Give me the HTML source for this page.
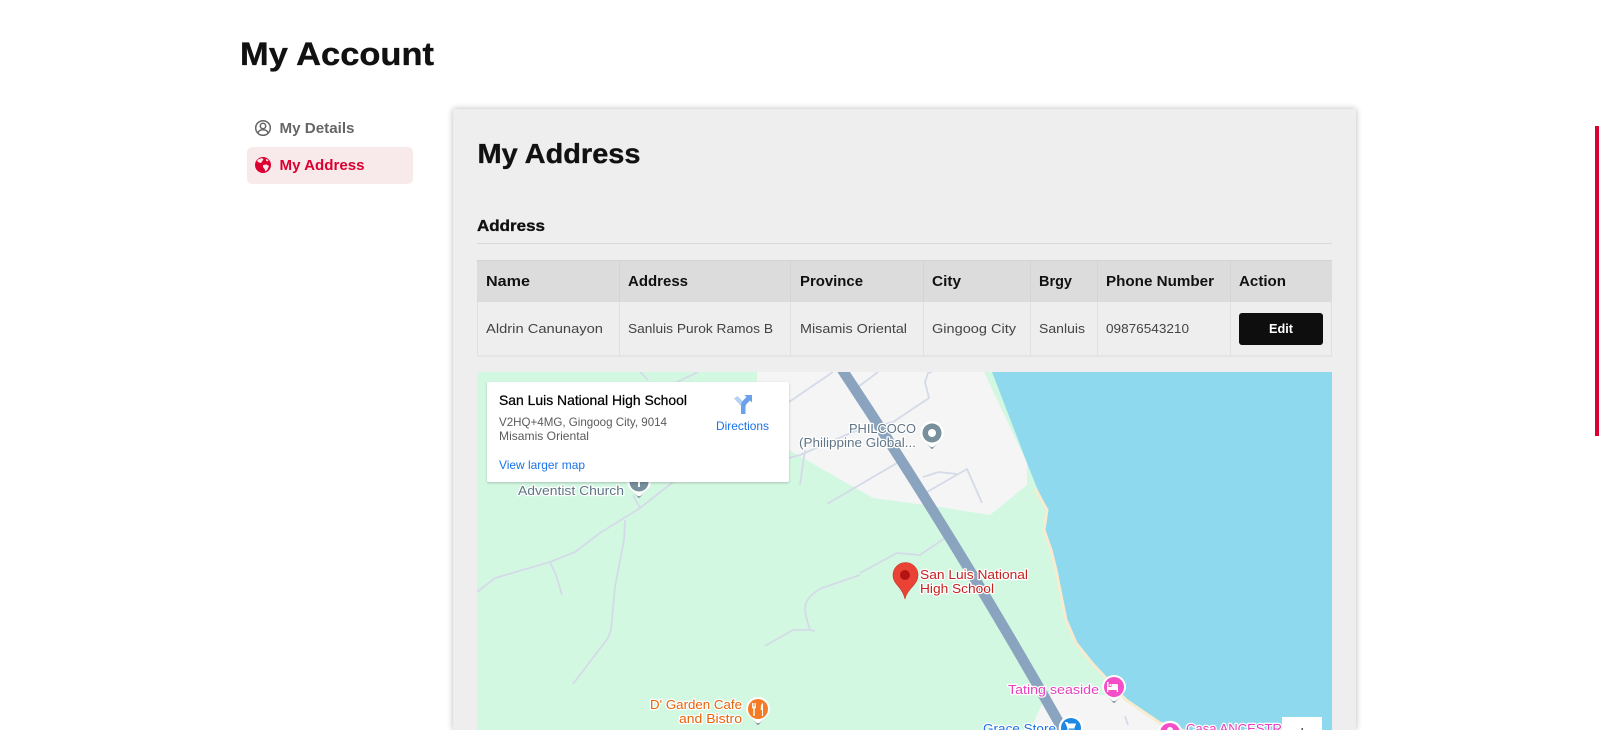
<!DOCTYPE html>
<html lang="en">
<head>
<meta charset="utf-8">
<title>My Account</title>
<style>
html,body{margin:0;padding:0;width:1599px;height:730px;overflow:hidden;background:#fff;font-family:"Liberation Sans",sans-serif}
#root{position:relative;width:1599px;height:730px;overflow:hidden;background:#fff}
.pill{position:absolute;left:247px;top:147px;width:166px;height:37px;background:#f8e9ea;border-radius:5px}
.panel{position:absolute;left:453px;top:109px;width:903px;height:621px;background:#eee;box-shadow:0 0 6px rgba(0,0,0,.28)}
.bar{position:absolute;left:1595px;top:126px;width:4px;height:310px;background:#dc0032}
svg.page{position:absolute;left:0;top:0;display:block}
text{font-family:"Liberation Sans",sans-serif}
.b{font-weight:700;fill:#111;stroke:#111;stroke-width:.35px}
.td{font-size:13px;fill:#444}
.th{font-size:14.5px;font-weight:700;fill:#111}
.m{font-size:13px;paint-order:stroke;stroke:#fff;stroke-width:2.5px;stroke-linejoin:round}
.r{fill:none;stroke:#d4dae8;stroke-width:1.8;stroke-linejoin:round;stroke-linecap:butt}
.card{font-size:12px}
</style>
</head>
<body>
<div id="root">
<div class="pill"></div>
<div class="panel"></div>
<div class="bar"></div>
<svg class="page" width="1599" height="730" viewBox="0 0 1599 730" xmlns="http://www.w3.org/2000/svg">
<defs>
<clipPath id="mapclip"><rect x="477" y="372" width="855" height="358"/></clipPath>
<filter id="cs" x="-5%" y="-5%" width="110%" height="115%"><feDropShadow dx="0" dy="1" stdDeviation="1.2" flood-color="#000" flood-opacity=".22"/></filter>
<g id="pin">
<path d="M-7 8l6 7.500q1 1 2 0l6-7.500z" fill="#8a9aa5"/>
<path d="M-12 0a12 12 0 1 1 24 0c0 4.500-3 7-5.500 9l-4.500 4.500q-2 1.300-4 0l-4.500-4.500c-2.500-2-5.500-4.500-5.500-9z" fill="#fff"/>
</g>
</defs>

<text x="240" y="65" class="b" font-size="32" textLength="194" lengthAdjust="spacingAndGlyphs">My Account</text>

<!-- sidebar -->
<g fill="none" stroke="#666" stroke-width="1.500">
<circle cx="263" cy="128" r="7.300"/>
<circle cx="263" cy="126" r="2.700"/>
<path d="M257.800 133c1-2.400 3-3.200 5.200-3.200s4.200.8 5.200 3.200"/>
</g>
<text x="279.500" y="133" font-size="14.500" font-weight="700" fill="#666" textLength="75" lengthAdjust="spacingAndGlyphs">My Details</text>
<circle cx="263" cy="165" r="8" fill="#dc0032"/>
<path d="M258 159.500l4-1.500 1.500 1.500-1.500 2-1 1.500-2-.5-2-1.500zM263 165l3.500-.5 2.500 1.500-1.500 3.500-2 2-1-2.500-1.500-2zM266 159l2.500 1-1 1.500-1.500-1z" fill="#f8e9ea"/>
<text x="279.500" y="170" font-size="14.500" font-weight="700" fill="#dc0032" textLength="85" lengthAdjust="spacingAndGlyphs">My Address</text>

<!-- panel heads -->
<text x="477.500" y="163" class="b" font-size="28" textLength="163" lengthAdjust="spacingAndGlyphs">My Address</text>
<text x="477" y="231" class="b" font-size="16" textLength="68" lengthAdjust="spacingAndGlyphs">Address</text>
<rect x="477" y="243" width="855" height="1" fill="#d8d8d8"/>

<!-- table -->
<rect x="477" y="260" width="855" height="42" fill="#dcdcdc"/>
<rect x="477" y="260" width="855" height="1" fill="#d3d3d3"/>
<rect x="477" y="355.500" width="855" height="1" fill="#dcdcdc"/>
<g fill="#d4d4d4">
<rect x="619" y="260" width="1" height="42"/><rect x="790" y="260" width="1" height="42"/><rect x="923" y="260" width="1" height="42"/><rect x="1030" y="260" width="1" height="42"/><rect x="1097" y="260" width="1" height="42"/><rect x="1230" y="260" width="1" height="42"/>
</g>
<g fill="#e0e0e0">
<rect x="619" y="302" width="1" height="54"/><rect x="790" y="302" width="1" height="54"/><rect x="923" y="302" width="1" height="54"/><rect x="1030" y="302" width="1" height="54"/><rect x="1097" y="302" width="1" height="54"/><rect x="1230" y="302" width="1" height="54"/><rect x="1331" y="302" width="1" height="54"/><rect x="477" y="302" width="1" height="54"/>
</g>
<text x="486" y="286" class="th" textLength="44" lengthAdjust="spacingAndGlyphs">Name</text>
<text x="628" y="286" class="th" textLength="60" lengthAdjust="spacingAndGlyphs">Address</text>
<text x="800" y="286" class="th" textLength="63" lengthAdjust="spacingAndGlyphs">Province</text>
<text x="932" y="286" class="th" textLength="29" lengthAdjust="spacingAndGlyphs">City</text>
<text x="1039" y="286" class="th" textLength="33" lengthAdjust="spacingAndGlyphs">Brgy</text>
<text x="1106" y="286" class="th" textLength="108" lengthAdjust="spacingAndGlyphs">Phone Number</text>
<text x="1239" y="286" class="th" textLength="47" lengthAdjust="spacingAndGlyphs">Action</text>

<text x="486" y="333" class="td" textLength="117" lengthAdjust="spacingAndGlyphs">Aldrin Canunayon</text>
<text x="628" y="333" class="td" textLength="145" lengthAdjust="spacingAndGlyphs">Sanluis Purok Ramos B</text>
<text x="800" y="333" class="td" textLength="107" lengthAdjust="spacingAndGlyphs">Misamis Oriental</text>
<text x="932" y="333" class="td" textLength="84" lengthAdjust="spacingAndGlyphs">Gingoog City</text>
<text x="1039" y="333" class="td" textLength="46" lengthAdjust="spacingAndGlyphs">Sanluis</text>
<text x="1106" y="333" class="td" textLength="83" lengthAdjust="spacingAndGlyphs">09876543210</text>
<rect x="1239" y="313" width="84" height="32" rx="3" fill="#0e0e0e"/>
<text x="1269" y="333" font-size="12.500" font-weight="700" fill="#fff" textLength="24" lengthAdjust="spacingAndGlyphs">Edit</text>

<!-- map -->
<g clip-path="url(#mapclip)">
<rect x="477" y="372" width="855" height="358" fill="#d3f8e2"/>
<path d="M757 372L757 440L789 450L873 498L940 507L990 515L1027 485L1027 463L984 372Z" fill="#f5f5f5"/>
<path d="M1030 730L1043 702L1047 695L1120 695L1127 700L1160 723L1190 730Z" fill="#f5f5f5"/>
<path d="M992 372L1027 463L1037 488L1048 510L1045 530L1052 550L1057 570L1063 600L1067 620L1077 643L1093 663L1127 700L1160 723L1190 731L1332 731L1332 372Z" fill="#8fd9ef"/>
<path d="M1035 489L1047 510L1044 530L1051 550L1056 570L1062 600L1066 620L1076 643L1092 663L1126 700L1160 723L1185 731" fill="none" stroke="#f7eccf" stroke-width="3" stroke-linejoin="round"/>

<g class="r">
<path d="M477 592L495 578L550 562L575 552L600 533L640 508L673 482"/>
<path d="M550 562L556 575L562 595"/>
<path d="M625 520L624 540L615 587L611 630L608 638L573 684"/>
<path d="M640 508L633 495"/>
<path d="M640 372L648 380M698 372L673 384"/>
<path d="M860 575L822 588Q810 594 806 603Q804 610 807 620L810 630L793 630L765 646M810 630L815 631"/>
<path d="M860 573L897 553L920 555L945 538"/>
<path d="M789 402L833 372M858 387L878 372"/>
<path d="M789 458L800 455L853 432L893 422L929 398L925 382L928 373L932 372"/>
<path d="M805 450L800 485"/>
<path d="M827 504L897 463"/>
<path d="M923 477L939 472L957 474"/>
<path d="M927 492L967 469L982 503"/>
<path d="M1125 716L1128 725"/>
</g>
<path d="M841 368Q963 551.500 1066 735" fill="none" stroke="#8aa3bf" stroke-width="10.500"/>

<!-- PHILCOCO -->
<text x="849" y="433" class="m" fill="#5f7485" textLength="67" lengthAdjust="spacingAndGlyphs">PHILCOCO</text>
<text x="799" y="447" class="m" fill="#5f7485" textLength="117" lengthAdjust="spacingAndGlyphs">(Philippine Global...</text>
<use href="#pin" x="932" y="433"/>
<circle cx="932" cy="433" r="9.500" fill="#78909c"/>
<circle cx="932" cy="433" r="4" fill="#fff"/>

<!-- Church -->
<text x="518" y="495" class="m" fill="#5f7485" textLength="106" lengthAdjust="spacingAndGlyphs">Adventist Church</text>
<use href="#pin" x="639" y="482"/>
<circle cx="639" cy="482" r="9.500" fill="#78909c"/>
<rect x="638" y="476" width="2" height="11" fill="#fff"/>

<!-- San Luis pin -->
<text x="920" y="579" class="m" fill="#c5221f" textLength="108" lengthAdjust="spacingAndGlyphs">San Luis National</text>
<text x="920" y="593" class="m" fill="#c5221f" textLength="74" lengthAdjust="spacingAndGlyphs">High School</text>
<path d="M905 599c-1.200-5.500-3.500-9-6.500-12.500c-3-3.500-5.500-6.500-5.500-11.500a12.500 12.500 0 1 1 25 0c0 5-2.500 8-5.500 11.500c-3 3.500-6.300 7-7.500 12.500z" fill="#ea4335" stroke="#c5352a" stroke-width=".6"/>
<circle cx="905" cy="575" r="5" fill="#b31412"/>

<!-- D Garden -->
<text x="650" y="709" class="m" fill="#e8630a" textLength="92" lengthAdjust="spacingAndGlyphs">D' Garden Cafe</text>
<text x="679" y="723" class="m" fill="#e8630a" textLength="63" lengthAdjust="spacingAndGlyphs">and Bistro</text>
<use href="#pin" x="758" y="709"/>
<circle cx="758" cy="709" r="10" fill="#f57c24"/>
<path d="M752 703v4c0 1 .7 1.500 1.300 1.700V716h1.400v-7.300c.6-.2 1.300-.7 1.300-1.700v-4h-.8v3.500h-.7V703h-.9v3.500h-.7V703zM763 703c-1.500.8-2.200 2.500-2.200 4.500v2.500h1.200v6h1z" fill="#fff"/>

<!-- Tating -->
<text x="1008" y="694" class="m" fill="#e83fbf" textLength="91" lengthAdjust="spacingAndGlyphs">Tating seaside</text>
<use href="#pin" x="1114" y="687"/>
<circle cx="1114" cy="687" r="10" fill="#f44fc8"/>
<path d="M1107 682h1.500v5h3v-3h5c1 0 1.500.8 1.500 1.500V692h-1.300v-2h-8.400v2H1107zM1109.500 684.300h1.500v1.700h-1.500z" fill="#fff"/>

<!-- Grace -->
<text x="983" y="733" class="m" fill="#1a73e8" textLength="73" lengthAdjust="spacingAndGlyphs">Grace Store</text>
<circle cx="1071" cy="728" r="12.300" fill="#fff"/>
<circle cx="1071" cy="728" r="10" fill="#1e88e5"/>
<path d="M1065 722h2.500l.6 1.500h8l-1.800 5h-5.500l-.5 1.200h6.500V731h-8.300l1-2.500-2-5.200H1065z" fill="#fff"/>

<!-- Casa -->
<text x="1186" y="733" class="m" fill="#e83fbf" textLength="96" lengthAdjust="spacingAndGlyphs">Casa ANCESTR</text>
<circle cx="1170" cy="733" r="12.300" fill="#fff"/>
<circle cx="1170" cy="733" r="10" fill="#f44fc8"/>
<circle cx="1170" cy="730" r="3" fill="#fff"/>

<!-- zoom control -->
<rect x="1282" y="717" width="40" height="14" fill="#fff"/>
<rect x="1301.500" y="728" width="1.500" height="3" fill="#555"/>

<!-- info card -->
<rect x="487" y="382" width="302" height="100" rx="2" fill="#fff" filter="url(#cs)"/>
<text x="499" y="405" font-size="14" fill="#000" stroke="#000" stroke-width=".25" textLength="188" lengthAdjust="spacingAndGlyphs">San Luis National High School</text>
<text x="499" y="426" class="card" fill="#5b5b5b" textLength="168" lengthAdjust="spacingAndGlyphs">V2HQ+4MG, Gingoog City, 9014</text>
<text x="499" y="440" class="card" fill="#5b5b5b" textLength="90" lengthAdjust="spacingAndGlyphs">Misamis Oriental</text>
<text x="499" y="469" class="card" fill="#1a73e8" textLength="86" lengthAdjust="spacingAndGlyphs">View larger map</text>
<text x="716" y="430" class="card" fill="#1a73e8" textLength="53" lengthAdjust="spacingAndGlyphs">Directions</text>
<path d="M734 398.500L737.500 396L743.500 402L741 406z" fill="#b4d2f4"/>
<path d="M741 414v-8c0-3 1-4.500 3-6.500l2.500-2.500-2-2h7.500v7.500l-2-2-3 3c-1 1-1.500 2-1.500 3.500V414z" fill="#6aa1e8"/>
</g>
</svg>
</div>
</body>
</html>
